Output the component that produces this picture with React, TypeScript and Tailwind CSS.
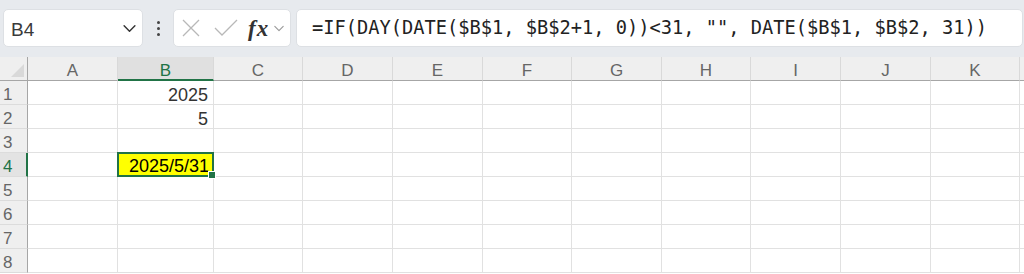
import React from "react";

const cols = ["A", "B", "C", "D", "E", "F", "G", "H", "I", "J", "K", ""];
const rows = [1, 2, 3, 4, 5, 6, 7, 8];

const cellData: Record<string, string> = {
  B1: "2025",
  B2: "5",
};

function Chevron({ className }: { className?: string }) {
  return (
    <svg viewBox="0 0 16 10" className={className} fill="none" stroke="currentColor" strokeWidth="1.6" strokeLinecap="round" strokeLinejoin="round">
      <path d="M2 2 L8 8 L14 2" />
    </svg>
  );
}

export default function App() {
  return (
    <div className="w-[1024px] h-[274px] overflow-hidden bg-white" style={{ fontFamily: '"Liberation Sans", Arial, sans-serif' }}>
      {/* Toolbar */}
      <div className="h-[57px] bg-[#e7eaee] flex items-start pt-[9px] pl-[3px]">
        <div className="w-[140px] h-[38px] bg-white rounded-[5px] border border-[#dde0e4] flex items-center pl-[7px] pr-[5px]">
          <span className="text-[19px] text-[#3a3a3a] flex-1 leading-none pt-[2px]">B4</span>
          <Chevron className="w-[15px] h-[9px] text-[#333]" />
        </div>
        <div className="w-[30px] h-[38px] flex flex-col items-center justify-center gap-[3px]">
          <div className="w-[3px] h-[3px] rounded-full bg-[#444]" />
          <div className="w-[3px] h-[3px] rounded-full bg-[#444]" />
          <div className="w-[3px] h-[3px] rounded-full bg-[#444]" />
        </div>
        <div className="w-[118px] h-[38px] bg-white rounded-[5px] border border-[#dde0e4] flex items-center pl-[7px]">
          <svg viewBox="0 0 20 20" className="w-[20px] h-[20px] text-[#b8b8b8]" fill="none" stroke="currentColor" strokeWidth="1.3">
            <path d="M2 2 L18 18 M18 2 L2 18" />
          </svg>
          <svg viewBox="0 0 24 18" className="w-[24px] h-[18px] ml-[13px] text-[#b8b8b8]" fill="none" stroke="currentColor" strokeWidth="1.3">
            <path d="M1 9 L8 16 L23 1" />
          </svg>
          <span className="ml-[10px] text-[23px] leading-none italic font-bold text-[#333] tracking-[1px]" style={{ fontFamily: '"Liberation Serif", "Times New Roman", serif' }}>
            fx
          </span>
          <Chevron className="ml-[4px] w-[12px] h-[7px] text-[#9a9a9a]" />
        </div>
        <div className="ml-[5px] w-[727px] h-[38px] bg-white rounded-[5px] border border-[#dde0e4] flex items-center pl-[15px]">
          <span className="text-[18.7px] text-[#222] whitespace-pre leading-none pt-[1px]" style={{ fontFamily: '"DejaVu Sans Mono", "Liberation Mono", monospace' }}>
            =IF(DAY(DATE($B$1, $B$2+1, 0))&lt;31, "", DATE($B$1, $B$2, 31))
          </span>
        </div>
      </div>

      {/* Grid */}
      <div className="grid grid-cols-[28px_90px_96px_89px_90px_90px_89px_90px_89px_90px_90px_89px_1fr] auto-rows-[24px]">
        {/* Corner */}
        <div className="relative bg-[#efefef] border-r border-b border-[#a6a6a6] overflow-hidden">
          <svg viewBox="0 0 20 20" className="absolute right-[3px] bottom-[3px] w-[13px] h-[13px]">
            <path d="M20 0 L20 20 L0 20 Z" fill="#d9d9d9" />
          </svg>
        </div>
        {cols.map((c, i) => {
          const sel = c === "B";
          return (
            <div
              key={"h" + i}
              className={
                "flex items-center justify-center pt-[4px] text-[17px] leading-none border-r border-[#d9d9d9] " +
                (sel
                  ? "bg-[#e0e0e0] text-[#217346] border-b-2 border-b-[#217346]"
                  : "bg-[#efefef] text-[#666] border-b border-b-[#a6a6a6]")
              }
            >
              {c}
            </div>
          );
        })}
        {rows.map((r) => (
          <React.Fragment key={r}>
            <div
              className={
                "flex items-center pl-[3px] pt-[4px] text-[17px] leading-none border-b border-[#dcdcdc] " +
                (r === 4
                  ? "bg-[#e3e3e3] text-[#217346] border-r-2 border-r-[#217346]"
                  : "bg-[#efefef] text-[#666] border-r border-r-[#a6a6a6]")
              }
            >
              {r}
            </div>
            {cols.map((c, i) => {
              const id = c + r;
              if (id === "B4") {
                return (
                  <div key={id} className="relative border-r border-b border-[#e1e1e1]">
                    <div className="absolute left-[-1px] top-[-1px] right-[-1px] bottom-[-1px] border-2 border-[#217346] bg-[#ffff00] flex items-center justify-end pr-[3px] pt-[2px]">
                      <span className="text-[18px] leading-none text-black">2025/5/31</span>
                    </div>
                    <div className="absolute right-[-3px] bottom-[-3px] w-[6px] h-[6px] bg-[#217346] border border-white box-content" />
                  </div>
                );
              }
              return (
                <div key={id} className="border-r border-b border-[#e1e1e1] flex items-center justify-end pr-[5px] pt-[4px] text-[18px] leading-none text-[#333]">
                  {cellData[id] ?? ""}
                </div>
              );
            })}
          </React.Fragment>
        ))}
      </div>
    </div>
  );
}
